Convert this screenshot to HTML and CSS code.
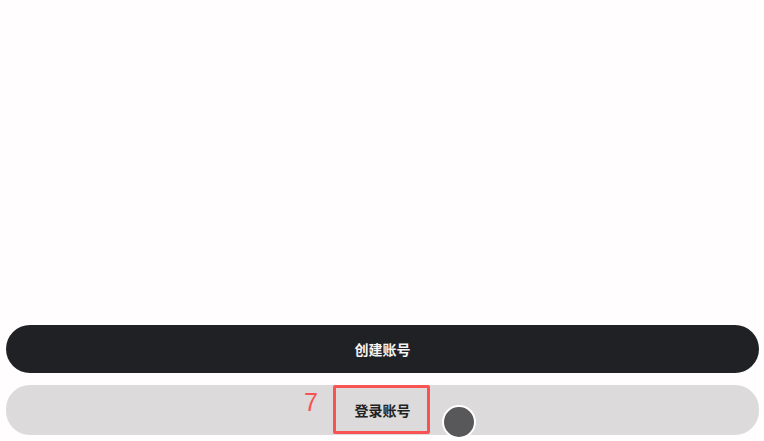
FILE: index.html
```html
<!DOCTYPE html>
<html lang="zh-CN">
<head>
  <meta charset="UTF-8">
  <meta name="viewport" content="width=device-width, initial-scale=1.0">
  <title>账号</title>
  <link rel="stylesheet" href="styles.css">
</head>
<body>
  <div class="screen">
    <div class="actions">
      <button class="btn btn-primary">创建账号</button>
      <button class="btn btn-secondary">
        <span class="step-num">7</span>
        <span class="step-box"></span>
        登录账号
        <span class="touch-dot"></span>
      </button>
    </div>
  </div>
</body>
</html>
```
FILE: styles.css
```css
:root {
  --bg-color: #fffdfd;
  --primary: #202124;
  --secondary: #dcdadb;
  --text-dark: #222222;
  --marker: #f85252;
  --dot: #58585a;
}

body {
  margin: 0;
  background-color: var(--bg-color);
  font-family: "Noto Sans CJK SC", "Noto Sans", sans-serif;
}

.screen {
  height: 441px;
  display: flex;
  flex-direction: column;
  justify-content: flex-end;
}

.actions {
  display: flex;
  flex-direction: column;
  gap: 12px;
  padding: 0 5px 6px 6px;
}

.btn {
  position: relative;
  width: 100%;
  height: 48px;
  border: none;
  border-radius: 24px;
  font-family: inherit;
  font-size: 14px;
  font-weight: 700;
  padding: 0;
}

.btn-primary {
  background-color: var(--primary);
  color: #f4f4f4;
}

.btn-secondary {
  height: 50px;
  background-color: var(--secondary);
  color: var(--text-dark);
}

/* tutorial marker over the login button */
.step-num {
  position: absolute;
  left: 298px;
  top: 3px;
  font-family: "Liberation Sans", sans-serif;
  font-size: 25px;
  font-weight: 400;
  color: var(--marker);
}

.step-box {
  position: absolute;
  left: 327px;
  top: 0;
  width: 91px;
  height: 43px;
  border: 3px solid var(--marker);
  border-radius: 2px;
}

.touch-dot {
  position: absolute;
  left: 436px;
  top: 20px;
  width: 30px;
  height: 30px;
  border-radius: 50%;
  background-color: var(--dot);
  border: 2px solid #ffffff;
}
```
